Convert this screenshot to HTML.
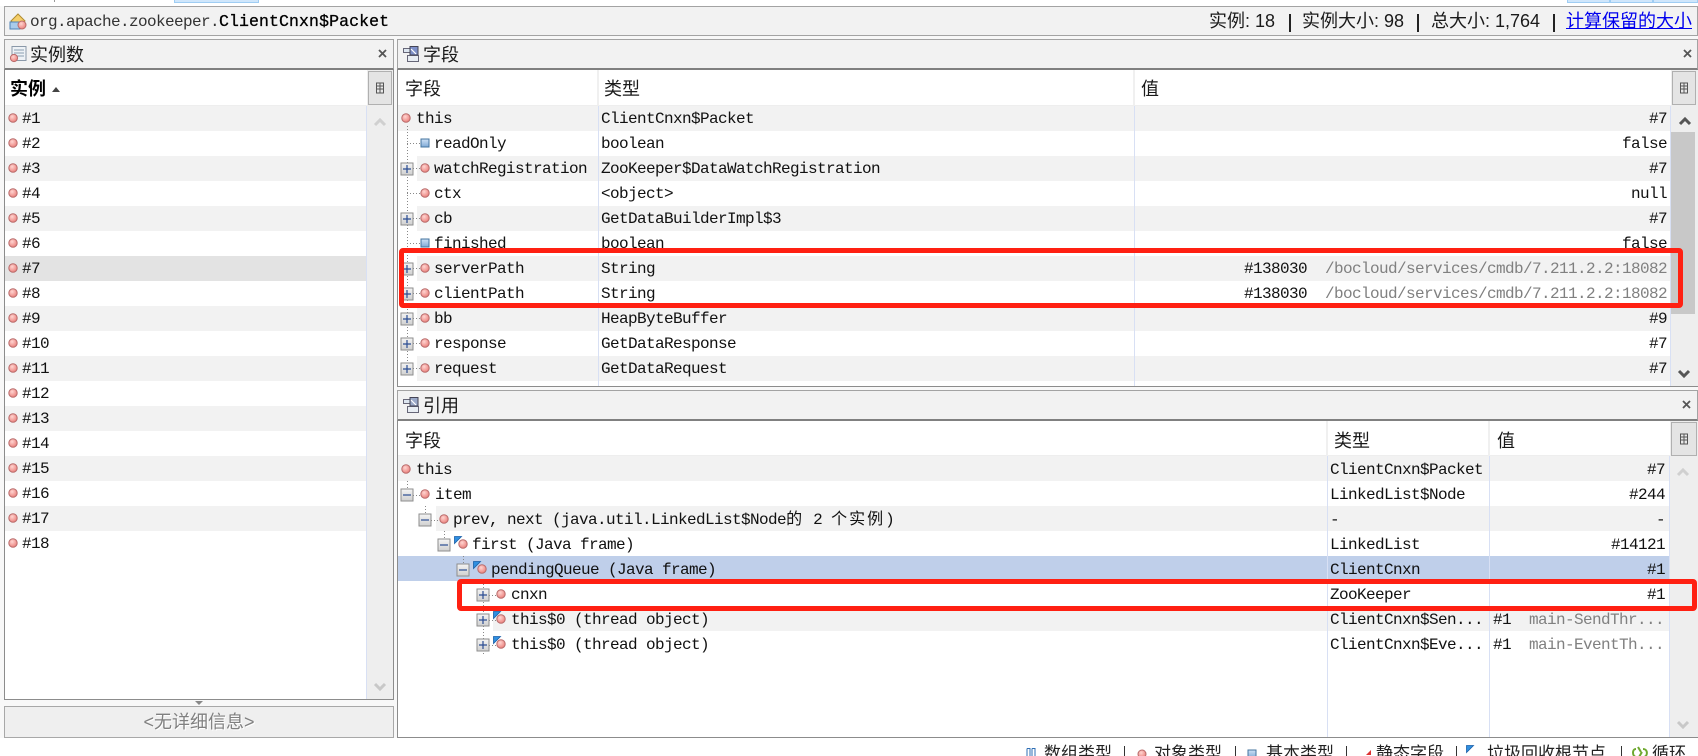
<!DOCTYPE html>
<html lang="zh"><head><meta charset="utf-8"><title>ClientCnxn$Packet</title>
<style>
html,body{margin:0;padding:0;background:#fff}
#p{position:relative;width:1698px;height:756px;overflow:hidden;background:#fff;font-family:"Liberation Mono","Noto Sans CJK SC",monospace;font-size:16px;letter-spacing:-.6px;color:#111}
#p div{position:absolute;box-sizing:border-box}
.t{white-space:pre;line-height:25px;height:25px;margin-top:1px}
.g{color:#808080}
.r{text-align:right}
.c{font-family:"Liberation Sans","Noto Sans CJK SC",sans-serif;font-size:18px;letter-spacing:0;line-height:26px;height:26px;white-space:pre;color:#1a1a1a}
.hd{background:#f2f2f2;border:1px solid #a3a3a3;border-bottom:2px solid #808080}
.bd{background:#fff;border:1px solid #8c8c8c;border-top:0}
.st{background:#f2f2f2;height:25px}
.col{width:1px;background:#d8e0f4}
.hc{width:2px;background:#f0f0f0}
.sb{background:#eee}
.btn{background:#e4e4e4;border:1px solid #b0b0b0}
.rd{border:5px solid #ff2012;border-radius:4px}
.lg{font-family:"Liberation Sans","Noto Sans CJK SC",sans-serif;font-size:17px;letter-spacing:0;line-height:20px;height:20px;white-space:pre;color:#222;top:744px}
svg{position:absolute;left:0;top:0}
</style></head><body><div id="p">

<div style="left:0;top:0;width:1698px;height:738px;background:#f8f8f8"></div>
<div style="left:0;top:0;width:1698px;height:6px;background:#fff"></div>
<div style="left:54px;top:0;width:1px;height:2px;background:#999"></div>
<div style="left:174px;top:0;width:85px;height:3px;background:#cfe6fb;border:1px solid #9fcdf3;border-top:0"></div>
<div style="left:1567px;top:0;width:43px;height:3px;background:#cfe6fb;border:1px solid #9fcdf3;border-top:0"></div>
<div style="left:1610px;top:0;width:43px;height:3px;background:#cfe6fb;border:1px solid #9fcdf3;border-top:0"></div>
<div style="left:1653px;top:0;width:45px;height:3px;background:#cfe6fb;border:1px solid #9fcdf3;border-top:0"></div>

<!-- top bar -->
<div style="left:4px;top:6px;width:1694px;height:30px;background:#f2f2f2;border:1px solid #a3a3a3"></div>
<div class="t" style="left:30px;top:8px;color:#333">org.apache.zookeeper.<span style="color:#000;font-size:16.5px;letter-spacing:.1px;-webkit-text-stroke:.3px #000">ClientCnxn$Packet</span></div>
<div class="c" style="left:1209px;top:8px">实例: 18</div>
<div style="left:1289px;top:14px;width:2px;height:18px;background:#222"></div>
<div class="c" style="left:1302px;top:8px">实例大小: 98</div>
<div style="left:1417px;top:14px;width:2px;height:18px;background:#222"></div>
<div class="c" style="left:1431px;top:8px">总大小: 1,764</div>
<div style="left:1553px;top:14px;width:2px;height:18px;background:#222"></div>
<div class="c" style="left:1566px;top:8px;color:#0000ee;text-decoration:underline">计算保留的大小</div>

<!-- left panel -->
<div class="hd" style="left:4px;top:39px;width:390px;height:31px"></div>
<div class="c" style="left:30px;top:42px">实例数</div>
<div class="bd" style="left:4px;top:70px;width:390px;height:630px"></div>
<div class="sb" style="left:367px;top:70px;width:26px;height:629px"></div>
<div class="btn" style="left:368px;top:71px;width:24px;height:34px"></div>
<div style="left:5px;top:105px;width:362px;height:1px;background:#eee"></div>
<div class="c" style="left:10px;top:76px;font-weight:bold;color:#000">实例</div>
<div class="st" style="left:5px;top:106px;width:361px"></div>
<div class="st" style="left:5px;top:156px;width:361px"></div>
<div class="st" style="left:5px;top:206px;width:361px"></div>
<div class="st" style="left:5px;top:256px;width:361px;background:#e3e3e3"></div>
<div class="st" style="left:5px;top:306px;width:361px"></div>
<div class="st" style="left:5px;top:356px;width:361px"></div>
<div class="st" style="left:5px;top:406px;width:361px"></div>
<div class="st" style="left:5px;top:456px;width:361px"></div>
<div class="st" style="left:5px;top:506px;width:361px"></div>
<div class="col" style="left:366px;top:106px;height:593px"></div>
<div class="t" style="left:22px;top:106px">#1</div>
<div class="t" style="left:22px;top:131px">#2</div>
<div class="t" style="left:22px;top:156px">#3</div>
<div class="t" style="left:22px;top:181px">#4</div>
<div class="t" style="left:22px;top:206px">#5</div>
<div class="t" style="left:22px;top:231px">#6</div>
<div class="t" style="left:22px;top:256px">#7</div>
<div class="t" style="left:22px;top:281px">#8</div>
<div class="t" style="left:22px;top:306px">#9</div>
<div class="t" style="left:22px;top:331px">#10</div>
<div class="t" style="left:22px;top:356px">#11</div>
<div class="t" style="left:22px;top:381px">#12</div>
<div class="t" style="left:22px;top:406px">#13</div>
<div class="t" style="left:22px;top:431px">#14</div>
<div class="t" style="left:22px;top:456px">#15</div>
<div class="t" style="left:22px;top:481px">#16</div>
<div class="t" style="left:22px;top:506px">#17</div>
<div class="t" style="left:22px;top:531px">#18</div>

<!-- detail box -->
<div style="left:4px;top:706px;width:390px;height:32px;background:#efefef;border:1px solid #a8a8a8"></div>
<div class="c" style="left:4px;width:390px;text-align:center;top:709px;color:#808080;text-shadow:1px 1px 0 #fff">&lt;无详细信息&gt;</div>

<!-- fields panel -->
<div class="hd" style="left:397px;top:39px;width:1301px;height:31px"></div>
<div class="c" style="left:423px;top:42px">字段</div>
<div class="bd" style="left:397px;top:70px;width:1301px;height:317px"></div>
<div class="sb" style="left:1671px;top:70px;width:27px;height:316px"></div>
<div class="btn" style="left:1672px;top:71px;width:24px;height:34px"></div>
<div style="left:1671px;top:132px;width:24px;height:182px;background:#c8c8c8"></div>
<div style="left:398px;top:105px;width:1273px;height:1px;background:#eee"></div>
<div class="hc" style="left:597px;top:70px;height:35px"></div>
<div class="hc" style="left:1133px;top:70px;height:35px"></div>
<div class="c" style="left:405px;top:76px">字段</div>
<div class="c" style="left:604px;top:76px">类型</div>
<div class="c" style="left:1141px;top:76px">值</div>
<div class="st" style="left:398px;top:106px;width:1272px"></div>
<div class="st" style="left:417px;top:156px;width:1253px"></div>
<div class="st" style="left:417px;top:206px;width:1253px"></div>
<div class="st" style="left:417px;top:256px;width:1253px"></div>
<div class="st" style="left:417px;top:306px;width:1253px"></div>
<div class="st" style="left:417px;top:356px;width:1253px"></div>
<div class="col" style="left:598px;top:106px;height:280px"></div>
<div class="col" style="left:1134px;top:106px;height:280px"></div>
<div class="col" style="left:1670px;top:106px;height:280px"></div>

<div class="t" style="left:416px;top:106px">this</div>
<div class="t" style="left:434px;top:131px">readOnly</div>
<div class="t" style="left:434px;top:156px">watchRegistration</div>
<div class="t" style="left:434px;top:181px">ctx</div>
<div class="t" style="left:434px;top:206px">cb</div>
<div class="t" style="left:434px;top:231px">finished</div>
<div class="t" style="left:434px;top:256px">serverPath</div>
<div class="t" style="left:434px;top:281px">clientPath</div>
<div class="t" style="left:434px;top:306px">bb</div>
<div class="t" style="left:434px;top:331px">response</div>
<div class="t" style="left:434px;top:356px">request</div>

<div class="t" style="left:601px;top:106px">ClientCnxn$Packet</div>
<div class="t" style="left:601px;top:131px">boolean</div>
<div class="t" style="left:601px;top:156px">ZooKeeper$DataWatchRegistration</div>
<div class="t" style="left:601px;top:181px">&lt;object&gt;</div>
<div class="t" style="left:601px;top:206px">GetDataBuilderImpl$3</div>
<div class="t" style="left:601px;top:231px">boolean</div>
<div class="t" style="left:601px;top:256px">String</div>
<div class="t" style="left:601px;top:281px">String</div>
<div class="t" style="left:601px;top:306px">HeapByteBuffer</div>
<div class="t" style="left:601px;top:331px">GetDataResponse</div>
<div class="t" style="left:601px;top:356px">GetDataRequest</div>

<div class="t r" style="right:31px;top:106px">#7</div>
<div class="t r" style="right:31px;top:131px">false</div>
<div class="t r" style="right:31px;top:156px">#7</div>
<div class="t r" style="right:31px;top:181px">null</div>
<div class="t r" style="right:31px;top:206px">#7</div>
<div class="t r" style="right:31px;top:231px">false</div>
<div class="t" style="left:1244px;top:256px">#138030</div>
<div class="t g" style="left:1325px;top:256px">/bocloud/services/cmdb/7.211.2.2:18082</div>
<div class="t" style="left:1244px;top:281px">#138030</div>
<div class="t g" style="left:1325px;top:281px">/bocloud/services/cmdb/7.211.2.2:18082</div>
<div class="t r" style="right:31px;top:306px">#9</div>
<div class="t r" style="right:31px;top:331px">#7</div>
<div class="t r" style="right:31px;top:356px">#7</div>

<!-- references panel -->
<div class="hd" style="left:397px;top:390px;width:1301px;height:31px"></div>
<div class="c" style="left:423px;top:393px">引用</div>
<div class="bd" style="left:397px;top:421px;width:1301px;height:317px"></div>
<div class="sb" style="left:1670px;top:421px;width:28px;height:316px"></div>
<div class="btn" style="left:1671px;top:422px;width:26px;height:34px"></div>
<div style="left:398px;top:455px;width:1272px;height:1px;background:#eee"></div>
<div class="hc" style="left:1326px;top:421px;height:35px"></div>
<div class="hc" style="left:1488px;top:421px;height:35px"></div>
<div class="c" style="left:405px;top:428px">字段</div>
<div class="c" style="left:1334px;top:428px">类型</div>
<div class="c" style="left:1497px;top:428px">值</div>
<div class="st" style="left:398px;top:456px;width:1271px"></div>
<div class="st" style="left:436px;top:506px;width:1233px"></div>
<div class="st" style="left:398px;top:556px;width:1271px;background:#bfcfea"></div>
<div class="st" style="left:493px;top:606px;width:1176px"></div>
<div class="col" style="left:1327px;top:456px;height:281px"></div>
<div class="col" style="left:1489px;top:456px;height:281px"></div>
<div class="col" style="left:1669px;top:456px;height:281px"></div>

<div class="t" style="left:416px;top:457px">this</div>
<div class="t" style="left:435px;top:482px">item</div>
<div class="t" style="left:453px;top:507px">prev, next (java.util.LinkedList$Node<span style="font-size:16px;letter-spacing:2px">的</span> 2 <span style="font-size:16px;letter-spacing:2px">个实例</span>)</div>
<div class="t" style="left:472px;top:532px">first (Java frame)</div>
<div class="t" style="left:491px;top:557px">pendingQueue (Java frame)</div>
<div class="t" style="left:511px;top:582px">cnxn</div>
<div class="t" style="left:511px;top:607px">this$0 (thread object)</div>
<div class="t" style="left:511px;top:632px">this$0 (thread object)</div>

<div class="t" style="left:1330px;top:457px">ClientCnxn$Packet</div>
<div class="t" style="left:1330px;top:482px">LinkedList$Node</div>
<div class="t" style="left:1330px;top:507px">-</div>
<div class="t" style="left:1330px;top:532px">LinkedList</div>
<div class="t" style="left:1330px;top:557px">ClientCnxn</div>
<div class="t" style="left:1330px;top:582px">ZooKeeper</div>
<div class="t" style="left:1330px;top:607px">ClientCnxn$Sen...</div>
<div class="t" style="left:1330px;top:632px">ClientCnxn$Eve...</div>

<div class="t r" style="right:33px;top:457px">#7</div>
<div class="t r" style="right:33px;top:482px">#244</div>
<div class="t r" style="right:33px;top:507px">-</div>
<div class="t r" style="right:33px;top:532px">#14121</div>
<div class="t r" style="right:33px;top:557px">#1</div>
<div class="t r" style="right:33px;top:582px">#1</div>
<div class="t" style="left:1493px;top:607px">#1</div>
<div class="t g" style="left:1529px;top:607px">main-SendThr...</div>
<div class="t" style="left:1493px;top:632px">#1</div>
<div class="t g" style="left:1529px;top:632px">main-EventTh...</div>

<!-- legend -->
<div class="lg" style="left:1044px">数组类型</div>
<div class="lg" style="left:1154px">对象类型</div>
<div class="lg" style="left:1266px">基本类型</div>
<div class="lg" style="left:1376px">静态字段</div>
<div class="lg" style="left:1487px">垃圾回收根节点</div>
<div class="lg" style="left:1652px">循环</div>

<svg width="1698" height="756" viewBox="0 0 1698 756" xmlns="http://www.w3.org/2000/svg">
<defs>
<radialGradient id="rg" cx=".4" cy=".35" r=".7"><stop offset="0" stop-color="#ffd4d0"/><stop offset="1" stop-color="#ea7c78"/></radialGradient>
<linearGradient id="bg" x1="0" y1="0" x2="0" y2="1"><stop offset="0" stop-color="#f4f4f4"/><stop offset="1" stop-color="#cfcfcf"/></linearGradient>
<linearGradient id="sq" x1="0" y1="0" x2="0" y2="1"><stop offset="0" stop-color="#cfe2f6"/><stop offset="1" stop-color="#7fa9d6"/></linearGradient>
<g id="o"><circle r="4.2" fill="url(#rg)" stroke="#b86a6a" stroke-width="1"/></g>
<g id="s"><rect x="-4" y="-4" width="8" height="8" fill="url(#sq)" stroke="#44749f"/></g>
<g id="m"><rect x="-6" y="-6" width="12" height="12" fill="url(#bg)" stroke="#8e8e8e"/><path d="M-4 0H4" stroke="#2a4c92" stroke-width="1.2"/></g>
<g id="l"><rect x="-6" y="-6" width="12" height="12" fill="url(#bg)" stroke="#8e8e8e"/><path d="M-4 0H4M0-4V4" stroke="#2a4c92" stroke-width="1.2"/></g>
<g id="f"><path d="M-3.5 3.5V-3.5H3.5Z" fill="#2f8fe0" stroke="#1a5fa8" stroke-width=".8"/></g>
<g id="cb"><rect x="-3.5" y="-5" width="7" height="10" fill="#e8e8e8" stroke="#555"/><path d="M-3-2H3M-3 1H3M0-5V5" stroke="#555" stroke-width="1"/></g>
</defs>

<!-- dotted tree lines -->
<g stroke="#888" stroke-width="1" stroke-dasharray="1 2" fill="none">
<path d="M407.5 126V366M407 143.5H420M413 168.5H420M407 193.5H420M413 218.5H420M407 243.5H420M413 268.5H420M413 293.5H420M413 318.5H420M413 343.5H420M413 368.5H420"/>
<path d="M407.5 481V489M413 495.5H420M425.5 506V514M431 520.5H438M444.5 531V539M463.5 556V564M483.5 581V656M489 595.5H496M489 620.5H496M489 645.5H496"/>
</g>

<!-- left list icons -->
<use href="#o" x="13" y="118"/><use href="#o" x="13" y="143"/><use href="#o" x="13" y="168"/><use href="#o" x="13" y="193"/><use href="#o" x="13" y="218"/><use href="#o" x="13" y="243"/><use href="#o" x="13" y="268"/><use href="#o" x="13" y="293"/><use href="#o" x="13" y="318"/><use href="#o" x="13" y="343"/><use href="#o" x="13" y="368"/><use href="#o" x="13" y="393"/><use href="#o" x="13" y="418"/><use href="#o" x="13" y="443"/><use href="#o" x="13" y="468"/><use href="#o" x="13" y="493"/><use href="#o" x="13" y="518"/><use href="#o" x="13" y="543"/>

<!-- fields tree -->
<use href="#o" x="406" y="118"/>
<use href="#s" x="425" y="143"/>
<use href="#l" x="407" y="169"/><use href="#o" x="425" y="168"/>
<use href="#o" x="425" y="193"/>
<use href="#l" x="407" y="219"/><use href="#o" x="425" y="218"/>
<use href="#s" x="425" y="243"/>
<use href="#l" x="407" y="269"/><use href="#o" x="425" y="268"/>
<use href="#l" x="407" y="294"/><use href="#o" x="425" y="293"/>
<use href="#l" x="407" y="319"/><use href="#o" x="425" y="318"/>
<use href="#l" x="407" y="344"/><use href="#o" x="425" y="343"/>
<use href="#l" x="407" y="369"/><use href="#o" x="425" y="368"/>

<!-- references tree -->
<use href="#o" x="406" y="469"/>
<use href="#m" x="407" y="495"/><use href="#o" x="425" y="494"/>
<use href="#m" x="425" y="520"/><use href="#o" x="444" y="519"/>
<use href="#m" x="444" y="545"/><use href="#f" x="458" y="540"/><use href="#o" x="463" y="544"/>
<use href="#m" x="463" y="570"/><use href="#f" x="477" y="565"/><use href="#o" x="482" y="569"/>
<use href="#l" x="483" y="595"/><use href="#o" x="501" y="594"/>
<use href="#l" x="483" y="620"/><use href="#f" x="497" y="615"/><use href="#o" x="501" y="619"/>
<use href="#l" x="483" y="645"/><use href="#f" x="497" y="640"/><use href="#o" x="501" y="644"/>

<!-- corner buttons -->
<use href="#cb" x="380" y="88"/><use href="#cb" x="1684" y="88"/><use href="#cb" x="1684" y="439"/>

<!-- close marks -->
<g stroke="#555" stroke-width="1.8" fill="none">
<path d="M379 50L386 57M386 50L379 57"/>
<path d="M1684 50L1691 57M1691 50L1684 57"/>
<path d="M1683 401L1690 408M1690 401L1683 408"/>
</g>

<!-- scroll arrows -->
<g fill="none" stroke-width="3">
<path d="M375 125L380 120L385 125" stroke="#d0d0d0"/>
<path d="M375 684L380 689L385 684" stroke="#c8c8c8"/>
<path d="M1680 124L1685 119L1690 124" stroke="#555"/>
<path d="M1679 371L1684 376L1689 371" stroke="#555"/>
<path d="M1678 475L1683 470L1688 475" stroke="#d0d0d0"/>
<path d="M1678 722L1683 727L1688 722" stroke="#c8c8c8"/>
</g>

<!-- sort & split triangles -->
<path d="M52 92L56 87L60 92Z" fill="#444"/>
<path d="M195 701H203L199 705Z" fill="#888"/>

<!-- title icon -->
<path d="M18 14L25 21L18 27L11 21Z" fill="#f5cf6a" stroke="#b08b30"/>
<path d="M10 22H20V29H10Z" fill="#a9cbea" stroke="#4f83b5"/>
<circle cx="22" cy="25" r="4" fill="url(#rg)" stroke="#b86a6a"/>

<!-- instances icon -->
<rect x="12" y="46.5" width="14" height="14" fill="#eef2f6" stroke="#8a98a8"/>
<path d="M14 50H24M14 53H24M14 56H24" stroke="#8a9db0"/>
<circle cx="14" cy="58" r="3.6" fill="url(#rg)" stroke="#b86a6a"/>

<!-- fields / reference icons -->
<g>
<rect x="403.5" y="48.5" width="8" height="4" fill="#dde6f0" stroke="#667"/>
<rect x="407.5" y="55.5" width="11" height="6" fill="#e8edf3" stroke="#667"/>
<path d="M410 46.5H418V55H410Z" fill="#7d8fc8" stroke="#445"/>
<path d="M411 49L416 54" stroke="#fff" stroke-width="1.2"/>
</g>
<g transform="translate(0,351)">
<rect x="403.5" y="48.5" width="8" height="4" fill="#dde6f0" stroke="#667"/>
<rect x="407.5" y="55.5" width="11" height="6" fill="#e8edf3" stroke="#667"/>
<path d="M410 46.5H418V55H410Z" fill="#9aa8c8" stroke="#445"/>
<path d="M411 49L416 54" stroke="#fff" stroke-width="1.2"/>
</g>

<!-- legend icons -->
<path d="M1027 748.5H1030V756M1027 748.5V756M1032 748.5H1035V756M1032 748.5V756" fill="none" stroke="#2f6fb5"/>
<circle cx="1142" cy="754" r="4" fill="url(#rg)" stroke="#b86a6a"/>
<use href="#s" x="1252" y="754"/>
<path d="M1366 755L1371 750V755Z" fill="#d33"/>
<use href="#f" x="1470" y="749"/>
<path d="M1636 749C1632 749 1632 756 1636 757M1643 749C1648 749 1648 756 1644 757M1638 747L1641 752M1642 752L1639 757" fill="none" stroke="#6fa82f" stroke-width="2"/>
<g stroke="#333" stroke-width="1"><path d="M1124.5 746V756M1235.5 746V756M1346.5 746V756M1456.5 746V756M1621.5 746V756"/></g>
</svg>

<!-- red annotations -->
<div class="rd" style="left:399px;top:248px;width:1284px;height:60px"></div>
<div class="rd" style="left:457px;top:579px;width:1240px;height:32px"></div>
</div></body></html>
